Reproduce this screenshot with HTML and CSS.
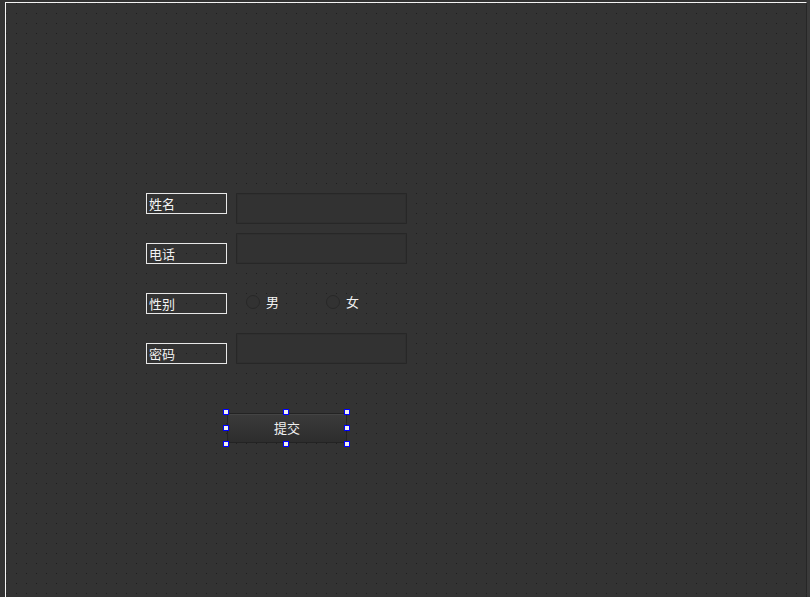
FILE: index.html
```html
<!DOCTYPE html>
<html lang="zh-CN">
<head>
<meta charset="utf-8">
<title>Form Designer</title>
<link rel="stylesheet" href="styles.css">
</head>
<body>
<div class="stage">
  <div class="canvas">
    <div class="label w-name">姓名</div>
    <div class="field f-name"></div>

    <div class="label w-phone">电话</div>
    <div class="field f-phone"></div>

    <div class="label w-sex">性别</div>
    <label class="radio r-male"><span class="dot"></span><span class="rtext">男</span></label>
    <label class="radio r-female"><span class="dot"></span><span class="rtext">女</span></label>

    <div class="label w-pwd">密码</div>
    <div class="field f-pwd"></div>

    <div class="btn-wrap">
      <div class="btn">提交</div>
      <span class="h h-tl"></span>
      <span class="h h-tm"></span>
      <span class="h h-tr"></span>
      <span class="h h-ml"></span>
      <span class="h h-mr"></span>
      <span class="h h-bl"></span>
      <span class="h h-bm"></span>
      <span class="h h-br"></span>
    </div>
  </div>
</div>
</body>
</html>
```
FILE: styles.css
```css
html, body {
  margin: 0;
  padding: 0;
}
body {
  width: 810px;
  height: 597px;
  overflow: hidden;
  background: #3a3a3a;
  font-family: "Noto Sans CJK SC", "Noto Sans", sans-serif;
  color: #f2f2f2;
}
.stage {
  width: 807px;
  height: 597px;
  background: #333333;
  padding: 2px 0 0 5px;
  box-sizing: border-box;
}
.canvas {
  position: relative;
  width: 800px;
  height: 600px;
  border-top: 1px solid #f4f4f4;
  border-left: 1px solid #f4f4f4;
  border-right: 1px solid #262626;
  background-color: #333333;
  background-image: radial-gradient(circle at 0.5px 0.5px, #1e1e1e 0.7px, transparent 0.9px);
  background-size: 10px 10px;
  background-position: 0 0;
}

.label {
  position: absolute;
  left: 140px;
  height: 19px;
  border: 1px solid #e8e8e8;
  font-size: 13px;
  line-height: 19px;
  padding-left: 2px;
  box-sizing: content-box;
  width: 77px;
}
.w-name { top: 190px; }
.w-phone { top: 240px; }
.w-sex { top: 290px; }
.w-pwd { top: 340px; }

.field {
  position: absolute;
  left: 230px;
  width: 169px;
  height: 29px;
  border: 1px solid #272727;
  background: #323232;
  box-shadow: inset 0 0 0 1px #2f2f2f;
}
.f-name { top: 190px; }
.f-phone { top: 230px; }
.f-pwd { top: 330px; }

.radio {
  position: absolute;
  top: 292px;
  height: 14px;
  display: flex;
  align-items: center;
  gap: 6px;
  font-size: 13px;
}
.r-male { left: 240px; }
.r-female { left: 320px; }
.dot {
  width: 12px;
  height: 12px;
  border: 1px solid #282828;
  border-radius: 50%;
  background: #323232;
}
.rtext {
  line-height: 14px;
}

.btn-wrap {
  position: absolute;
  left: 220px;
  top: 409px;
  width: 122px;
  height: 32px;
}
.btn {
  position: absolute;
  left: 1px;
  top: 1px;
  right: 1px;
  bottom: 1px;
  border: 1px solid #232323;
  background: linear-gradient(#3b3b3b, #2d2d2d);
  box-shadow: inset 0 1px 0 #444;
  font-size: 13px;
  padding-bottom: 2px;
  box-sizing: border-box;
  display: flex;
  align-items: center;
  justify-content: center;
  color: #f0f0f0;
}
.h {
  position: absolute;
  width: 4px;
  height: 4px;
  border: 1px solid #0000ff;
  background: #f0f0f0;
}
.h-tl { left: -3px; top: -3px; }
.h-tm { left: 57px; top: -3px; }
.h-tr { left: 118px; top: -3px; }
.h-ml { left: -3px; top: 13px; }
.h-mr { left: 118px; top: 13px; }
.h-bl { left: -3px; top: 29px; }
.h-bm { left: 57px; top: 29px; }
.h-br { left: 118px; top: 29px; }
```
